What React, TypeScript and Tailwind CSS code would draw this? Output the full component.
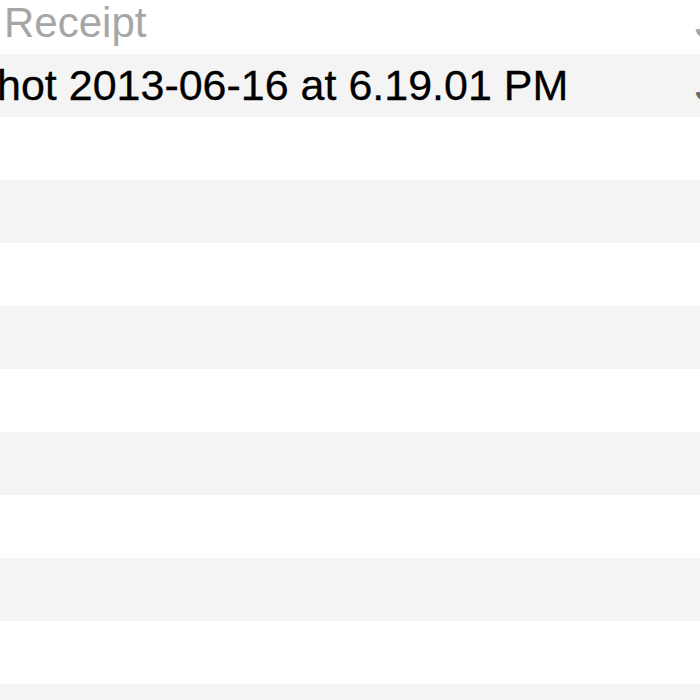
export default function App() {
  const rows = Array.from({ length: 9 });

  return (
    <div
      className="w-[700px] h-[700px] overflow-hidden bg-white"
      style={{ fontFamily: '"Liberation Sans", Arial, sans-serif' }}
    >
      <div className="-mt-[9px] flex flex-col">
        {/* dimmed row */}
        <div className="h-[63px] flex items-center bg-white text-[42px] text-[#a6a6a6] whitespace-nowrap">
          <div className="w-[695px] shrink-0 overflow-hidden pl-[4px]">Receipt</div>
          <div className="shrink-0">Jun 16, 2013</div>
        </div>

        <div className="h-[63px] flex items-center bg-[#f4f4f4] text-[43px] text-black whitespace-nowrap">
          <div className="w-[695px] shrink-0 overflow-hidden">
            <span className="block -ml-[3px] [-webkit-text-stroke:0.3px_black]">
              hot 2013-06-16 at 6.19.01 PM
            </span>
          </div>
          <div className="shrink-0 text-[#6b6b6b]">Jun 16, 2013</div>
        </div>

        {rows.map((_, i) => (
          <div
            key={i}
            className={i % 2 === 0 ? "h-[63px] bg-white" : "h-[63px] bg-[#f4f4f4]"}
          />
        ))}
        <div className="h-[63px] bg-[#f4f4f4]" />
      </div>
    </div>
  );
}
